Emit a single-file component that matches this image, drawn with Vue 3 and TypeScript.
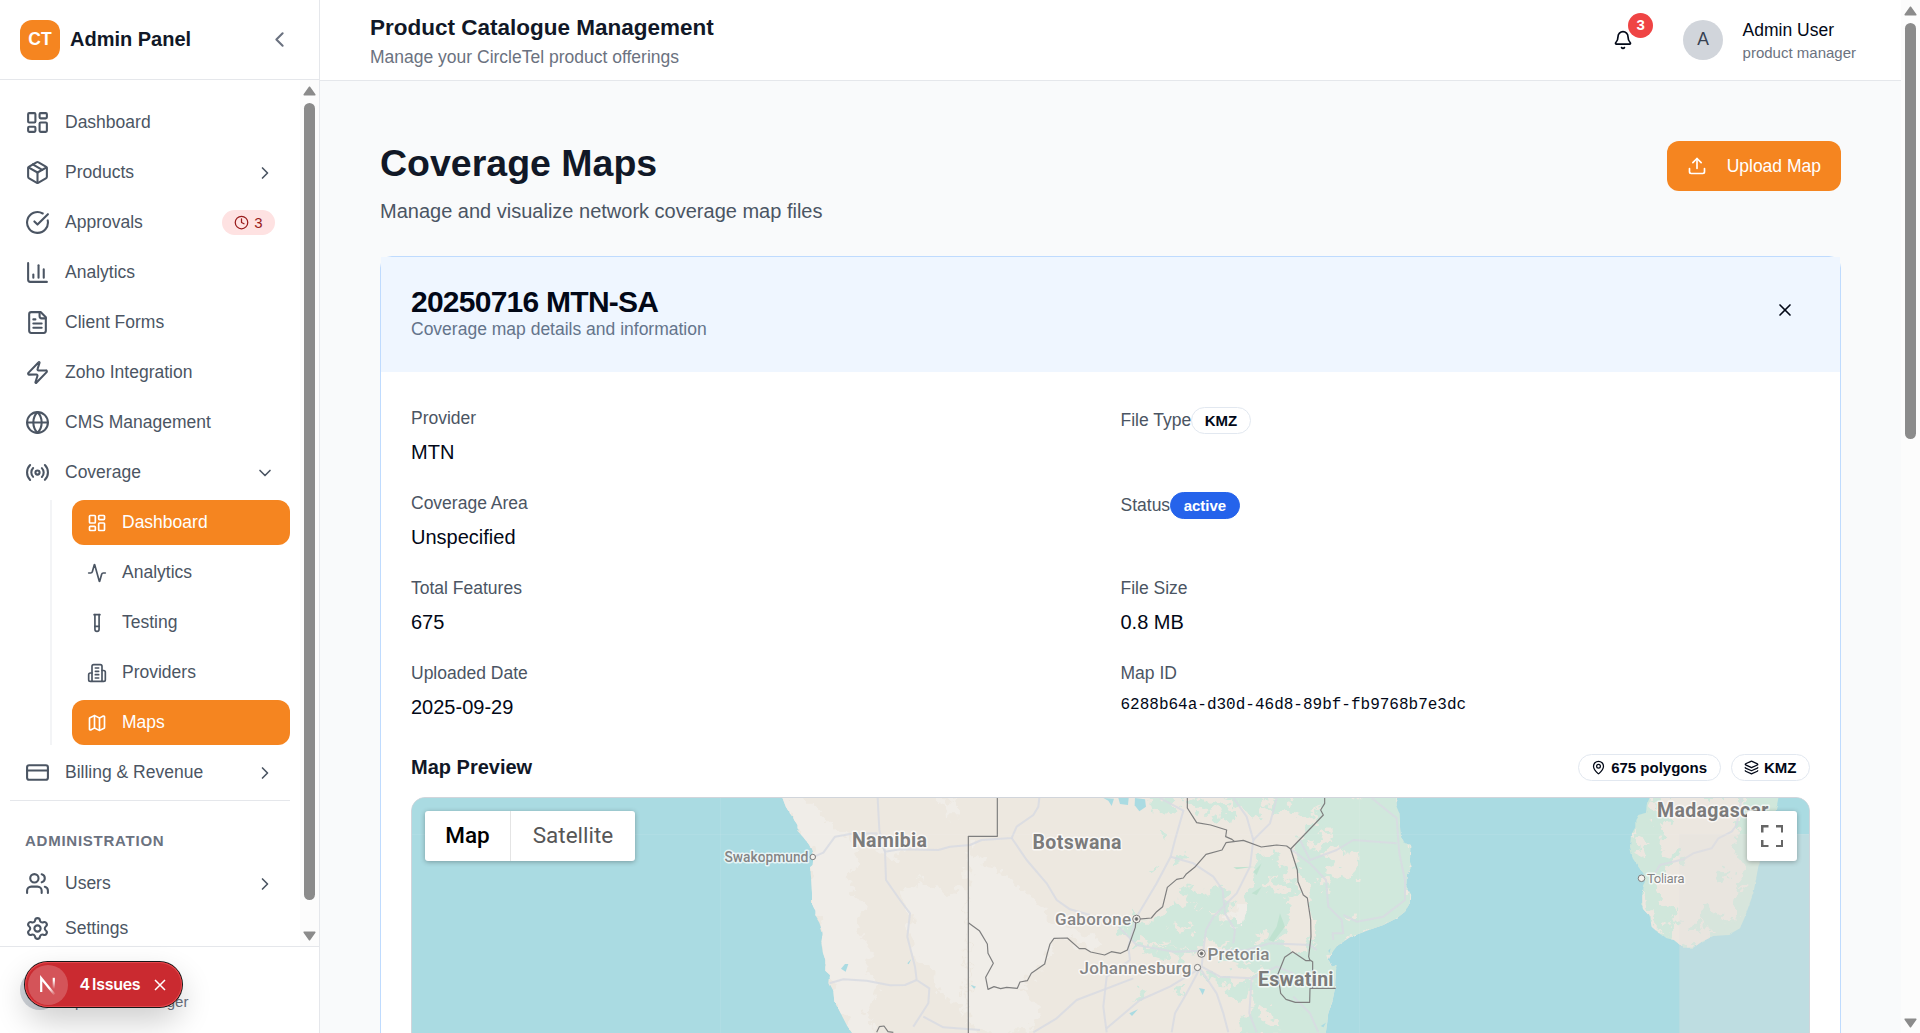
<script setup lang="ts">
interface NavItem {
  label: string
  icon: string
  chevron?: 'right' | 'down'
  badge?: number
}
interface SubItem {
  label: string
  icon: string
  active?: boolean
}

const icons: Record<string, string> = {
  dashboard:
    '<rect width="7" height="9" x="3" y="3" rx="1"/><rect width="7" height="5" x="14" y="3" rx="1"/><rect width="7" height="9" x="14" y="12" rx="1"/><rect width="7" height="5" x="3" y="16" rx="1"/>',
  package:
    '<path d="M11 21.73a2 2 0 0 0 2 0l7-4A2 2 0 0 0 21 16V8a2 2 0 0 0-1-1.73l-7-4a2 2 0 0 0-2 0l-7 4A2 2 0 0 0 3 8v8a2 2 0 0 0 1 1.73z"/><path d="M12 22V12"/><path d="M3.29 7 12 12l8.71-5"/><path d="m7.5 4.27 9 5.15"/>',
  check: '<path d="M21.801 10A10 10 0 1 1 17 3.335"/><path d="m9 11 3 3L22 4"/>',
  chart: '<path d="M3 3v16a2 2 0 0 0 2 2h16"/><path d="M18 17V9"/><path d="M13 17V5"/><path d="M8 17v-3"/>',
  file: '<path d="M15 2H6a2 2 0 0 0-2 2v16a2 2 0 0 0 2 2h12a2 2 0 0 0 2-2V7Z"/><path d="M14 2v4a2 2 0 0 0 2 2h4"/><path d="M10 9H8"/><path d="M16 13H8"/><path d="M16 17H8"/>',
  zap: '<path d="M4 14a1 1 0 0 1-.78-1.63l9.9-10.2a.5.5 0 0 1 .86.46l-1.92 6.02A1 1 0 0 0 13 10h7a1 1 0 0 1 .78 1.63l-9.9 10.2a.5.5 0 0 1-.86-.46l1.92-6.02A1 1 0 0 0 11 14z"/>',
  globe: '<circle cx="12" cy="12" r="10"/><path d="M12 2a14.5 14.5 0 0 0 0 20 14.5 14.5 0 0 0 0-20"/><path d="M2 12h20"/>',
  radio:
    '<path d="M4.9 19.1C1 15.2 1 8.8 4.9 4.9"/><path d="M7.8 16.2c-2.3-2.3-2.3-6.1 0-8.5"/><circle cx="12" cy="12" r="2"/><path d="M16.2 7.8c2.3 2.3 2.3 6.1 0 8.5"/><path d="M19.1 4.9C23 8.8 23 15.1 19.1 19"/>',
  activity:
    '<path d="M22 12h-2.48a2 2 0 0 0-1.93 1.46l-2.35 8.36a.25.25 0 0 1-.48 0L9.24 2.18a.25.25 0 0 0-.48 0l-2.35 8.38A2 2 0 0 1 4.49 12H2"/>',
  tube: '<path d="M14.5 2v17.5c0 1.4-1.1 2.5-2.5 2.5c-1.4 0-2.5-1.1-2.5-2.5V2"/><path d="M8.5 2h7"/><path d="M14.5 16h-5"/>',
  building:
    '<path d="M6 22V4a2 2 0 0 1 2-2h8a2 2 0 0 1 2 2v18Z"/><path d="M6 12H4a2 2 0 0 0-2 2v6a2 2 0 0 0 2 2h2"/><path d="M18 9h2a2 2 0 0 1 2 2v9a2 2 0 0 1-2 2h-2"/><path d="M10 6h4"/><path d="M10 10h4"/><path d="M10 14h4"/><path d="M10 18h4"/>',
  map: '<path d="M14.106 5.553a2 2 0 0 0 1.788 0l3.659-1.83A1 1 0 0 1 21 4.619v12.764a1 1 0 0 1-.553.894l-4.553 2.277a2 2 0 0 1-1.788 0l-4.212-2.106a2 2 0 0 0-1.788 0l-3.659 1.83A1 1 0 0 1 3 19.381V6.618a1 1 0 0 1 .553-.894l4.553-2.277a2 2 0 0 1 1.788 0z"/><path d="M15 5.764v15"/><path d="M9 3.236v15"/>',
  card: '<rect width="20" height="14" x="2" y="5" rx="2"/><path d="M2 10h20"/>',
  users:
    '<path d="M16 21v-2a4 4 0 0 0-4-4H6a4 4 0 0 0-4 4v2"/><circle cx="9" cy="7" r="4"/><path d="M22 21v-2a4 4 0 0 0-3-3.87"/><path d="M16 3.13a4 4 0 0 1 0 7.75"/>',
  settings:
    '<path d="M9.671 4.136a2.34 2.34 0 0 1 4.659 0 2.34 2.34 0 0 0 3.319 1.915 2.34 2.34 0 0 1 2.33 4.033 2.34 2.34 0 0 0 0 3.831 2.34 2.34 0 0 1-2.33 4.033 2.34 2.34 0 0 0-3.319 1.915 2.34 2.34 0 0 1-4.659 0 2.34 2.34 0 0 0-3.32-1.915 2.34 2.34 0 0 1-2.33-4.033 2.34 2.34 0 0 0 0-3.831A2.34 2.34 0 0 1 6.35 6.051a2.34 2.34 0 0 0 3.319-1.915"/><circle cx="12" cy="12" r="3"/>',
  left: '<path d="m15 18-6-6 6-6"/>',
  right: '<path d="m9 18 6-6-6-6"/>',
  down: '<path d="m6 9 6 6 6-6"/>',
  clock: '<circle cx="12" cy="12" r="10"/><path d="M12 6v6l4 2"/>',
  bell: '<path d="M10.268 21a2 2 0 0 0 3.464 0"/><path d="M3.262 15.326A1 1 0 0 0 4 17h16a1 1 0 0 0 .74-1.673C19.41 13.956 18 12.499 18 8A6 6 0 0 0 6 8c0 4.499-1.411 5.956-2.738 7.326"/>',
  upload: '<path d="M12 3v12"/><path d="m17 8-5-5-5 5"/><path d="M21 15v4a2 2 0 0 1-2 2H5a2 2 0 0 1-2-2v-4"/>',
  close: '<path d="M18 6 6 18"/><path d="m6 6 12 12"/>',
  pin: '<path d="M20 10c0 4.993-5.539 10.193-7.399 11.799a1 1 0 0 1-1.202 0C9.539 20.193 4 14.993 4 10a8 8 0 0 1 16 0"/><circle cx="12" cy="10" r="3"/>',
  layers:
    '<path d="M12.83 2.18a2 2 0 0 0-1.66 0L2.6 6.08a1 1 0 0 0 0 1.83l8.58 3.91a2 2 0 0 0 1.66 0l8.58-3.9a1 1 0 0 0 0-1.83z"/><path d="M2 12a1 1 0 0 0 .58.91l8.6 3.91a2 2 0 0 0 1.65 0l8.58-3.9A1 1 0 0 0 22 12"/><path d="M2 17a1 1 0 0 0 .58.91l8.6 3.91a2 2 0 0 0 1.65 0l8.58-3.9A1 1 0 0 0 22 17"/>',
}

const mainNav: NavItem[] = [
  { label: 'Dashboard', icon: 'dashboard' },
  { label: 'Products', icon: 'package', chevron: 'right' },
  { label: 'Approvals', icon: 'check', badge: 3 },
  { label: 'Analytics', icon: 'chart' },
  { label: 'Client Forms', icon: 'file' },
  { label: 'Zoho Integration', icon: 'zap' },
  { label: 'CMS Management', icon: 'globe' },
  { label: 'Coverage', icon: 'radio', chevron: 'down' },
]
const coverageNav: SubItem[] = [
  { label: 'Dashboard', icon: 'dashboard', active: true },
  { label: 'Analytics', icon: 'activity' },
  { label: 'Testing', icon: 'tube' },
  { label: 'Providers', icon: 'building' },
  { label: 'Maps', icon: 'map', active: true },
]

const details: { label: string; value: string; kind?: 'outline' | 'solid' | 'mono' }[] = [
  { label: 'Provider', value: 'MTN' },
  { label: 'File Type', value: 'KMZ', kind: 'outline' },
  { label: 'Coverage Area', value: 'Unspecified' },
  { label: 'Status', value: 'active', kind: 'solid' },
  { label: 'Total Features', value: '675' },
  { label: 'File Size', value: '0.8 MB' },
  { label: 'Uploaded Date', value: '2025-09-29' },
  { label: 'Map ID', value: '6288b64a-d30d-46d8-89bf-fb9768b7e3dc', kind: 'mono' },
]

/* Map geometry, drawn in thirds of a pixel from the map tile origin */
const africa =
  'M-358 40 L-342 82 L-325 108 L-308 135 L-308 152 L-290 172 L-272 195 L-264 215 L-260 235 L-262 255 L-270 262 L-266 300 L-264 340 L-264 372 L-254 392 L-254 408 L-242 428 L-232 458 L-236 490 L-232 515 L-224 540 L-224 572 L-210 585 L-212 610 L-200 632 L-197 665 L-180 695 L-172 712 L-160 735 L-136 770 L1276 770 L1285 700 L1298 660 L1305 625 L1309 555 L1296 560 L1286 540 L1296 518 L1312 497 L1350 472 L1400 452 L1450 435 L1490 415 L1515 395 L1529 370 L1531 340 L1519 320 L1520 285 L1535 260 L1530 245 L1531 195 L1515 190 L1502 170 L1500 140 L1498 100 L1490 80 L1488 40 Z'
const paleLand = [
  'M-358 40 L-342 82 L-325 108 L-308 135 L-308 152 L-290 172 L-272 195 L-264 215 L-262 255 L-270 262 L-264 372 L-254 408 L-232 458 L-224 572 L-210 585 L-200 632 L-197 665 L-172 712 L-136 770 L-60 770 L-100 700 L-70 640 L-100 560 L-90 500 L-130 440 L-110 360 L-160 300 L-120 250 L-150 180 L-230 110 L-300 40 Z',
  'M205 200 L260 250 L330 290 L370 340 L410 360 L450 420 L520 440 L600 480 L580 520 L500 480 L455 480 L430 560 L360 625 L420 680 L400 757 L205 757 Z',
  'M0 330 L60 300 L130 340 L200 330 L200 690 L130 650 L90 560 L40 520 L30 420 Z',
  'M990 395 L1040 380 L1055 420 L1030 455 L995 440 Z',
  'M-60 200 L-20 180 L10 210 L-30 240 Z',
  'M120 60 L170 54 L165 110 L140 90 Z',
]
const greenLand = [
  'M1275 40 L1500 40 L1510 100 L1515 170 L1545 200 L1535 280 L1540 345 L1525 405 L1450 445 L1350 482 L1300 520 L1292 540 L1320 560 L1315 625 L1295 700 L1286 780 L1140 780 L1125 700 L1060 650 L1060 590 L1130 590 L1150 520 L1220 515 L1235 450 L1225 340 L1190 240 L1180 200 L1240 130 Z',
  'M985 40 L1275 40 L1262 85 L1215 110 L1180 90 L1130 105 L1090 80 L1070 120 L1035 80 L1000 75 Z',
  'M1060 240 L1120 225 L1160 240 L1145 290 L1190 310 L1210 350 L1150 360 L1170 400 L1150 470 L1110 490 L1080 450 L1035 425 L1050 330 Z',
  'M840 325 L880 318 L900 345 L940 320 L985 330 L965 360 L1010 365 L960 415 L900 380 L870 370 Z',
  'M755 425 L790 400 L840 395 L900 400 L950 435 L1040 425 L1085 450 L1060 500 L1010 505 L930 480 L880 510 L800 500 L740 475 L690 490 L655 440 L710 425 Z',
  'M950 505 L1130 485 L1190 520 L1130 590 L1060 575 L1010 560 L960 545 Z',
  'M800 395 L850 360 L900 385 L960 380 L980 430 L900 440 L830 430 Z',
  'M700 495 L790 500 L880 515 L800 535 L730 520 Z',
  'M1060 610 L1140 630 L1200 665 L1240 770 L1020 770 L1015 730 L1060 690 Z',
  'M740 40 L805 40 L830 85 L790 105 L750 72 Z',
  'M780 150 L803 160 L795 182 L782 176 Z',
  'M825 225 L868 220 L866 238 L820 240 Z',
  'M750 255 L775 262 L765 275 Z',
  'M845 60 L900 45 L935 80 L960 70 L1010 90 L1000 125 L930 95 L880 95 Z',
  'M890 565 L960 585 L1000 620 L1040 600 L1070 630 L1010 655 L960 610 Z',
  'M720 628 L750 635 L700 665 L705 645 Z',
  'M820 625 L850 625 L835 645 Z',
  'M700 385 L710 410 L690 395 Z',
]
const creamPatches = [
  'M1265 215 L1310 195 L1330 220 L1385 205 L1370 260 L1375 300 L1340 290 L1290 275 L1300 245 Z',
  'M1225 190 L1270 165 L1305 162 L1260 200 L1235 215 Z',
  'M1090 305 L1130 310 L1190 330 L1150 345 L1090 325 Z',
  'M1180 490 L1200 470 L1215 505 Z',
  'M1080 690 L1120 700 L1150 745 L1110 735 L1075 720 Z',
  'M1210 335 L1240 420 L1250 470 L1235 500 L1225 400 Z',
  'M930 395 L965 400 L940 415 Z',
  'M1075 455 L1110 460 L1100 485 L1060 480 Z',
  'M800 440 L850 430 L880 448 L830 458 Z',
  'M1270 285 L1290 290 L1275 330 L1250 310 Z',
  'M1090 60 L1130 62 L1110 85 Z',
  'M1150 60 L1190 65 L1165 80 Z',
  'M1010 535 L1060 530 L1050 550 Z',
  'M1350 405 L1370 400 L1362 425 Z',
  'M780 480 L820 478 L800 492 Z',
]
const deepGreen = [
  'M1140 400 L1155 440 L1120 485 L1105 480 L1130 440 Z',
  'M1055 340 L1085 320 L1070 345 Z',
  'M1000 262 L1060 260 L1010 268 Z',
  'M1085 250 L1070 285 L1060 275 Z',
]
const lakes = [
  'M610 54 L642 56 L635 78 L625 62 Z',
  'M655 54 L686 54 L684 75 L660 72 Z',
  'M705 54 L735 58 L738 80 L718 94 L704 76 Z',
  'M-165 552 L-155 552 L-163 575 L-177 566 Z',
  'M22 550 L34 537 L26 553 Z',
  'M212 614 L228 620 L222 626 Z',
  'M897 624 L915 628 L908 645 Z',
  'M1278 728 L1270 742 L1262 738 Z',
  'M688 700 L714 688 L696 708 Z',
  'M1285 512 L1292 505 L1288 520 Z',
]
const roads = [
  'M-262 232 L-230 218 L-195 170 L-150 162 L-70 160 L-45 215 L0 208 L115 210 L150 200 L210 195 L245 180 L335 174 L350 140 L400 105 L415 80 L418 54',
  'M-67 54 L-62 150 L-45 215 L-42 300 L0 360 L30 400 L22 470 L45 560 L50 600 L88 625 L85 670 L40 740',
  'M-212 610 L-170 598 L-100 602 L-30 616 L15 615 L50 600',
  'M70 710 L130 742 L240 750',
  'M335 174 L380 240 L440 310 L470 360 L510 388 L570 405',
  'M780 54 L850 92 L825 180 L812 230 L770 310 L710 410 L685 500 L690 540 L620 590 L610 680 L620 757',
  'M812 230 L880 250 L940 290 L968 330 L975 400 L1005 450 L1000 490',
  'M1000 54 L1040 110 L1060 180 L1050 260 L1010 340 L940 410 L918 450 L910 510 L905 560 L960 590 L1055 595 L1130 560 L1180 580',
  'M1060 180 L1110 130 L1130 54',
  'M1172 207 L1230 250 L1278 300 L1285 380 L1325 420 L1330 460 L1298 460 L1300 480',
  'M1200 180 L1230 240 L1310 210 L1360 180 L1490 190',
  'M1415 54 L1490 115 L1498 220 L1515 300 L1515 360 L1450 410 L1370 425 L1330 405',
  'M400 757 L470 715 L530 660 L700 595',
  'M620 745 L720 660 L810 620 L900 565 L860 640 L825 700 L815 757',
  'M900 565 L950 640 L970 700 L985 757',
  'M655 440 L710 495 L820 515 L910 512 L1040 510 L1110 490 L1230 495 L1250 510',
  'M1055 595 L1048 700 L1070 757',
  'M1180 650 L1230 700 L1255 757',
]
const borders = [
  'M292 40 V169 H205 V770',
  'M205 428 L238 452 L262 492 L264 520 L280 550 L257 592 L264 628 L282 620 L302 626 L320 622 L352 625 L360 606 L382 602 L394 580 L434 552 L442 520 L450 492 L462 475 L502 474 L538 506 L556 506 L572 516 L614 525 L634 515 L662 520 L682 510 L706 442 L708 418 L754 414 L770 395 L788 380 L802 322 L830 298 L850 294 L858 283 L884 262 L918 223 L966 210 L978 188 L1030 181 L1084 201 L1130 195 L1160 198 L1172 207 L1192 270 L1194 305 L1210 345 L1222 354 L1232 420 L1233 470 L1226 530 L1230 542 L1218 542 L1178 515 L1154 532 L1134 582 L1142 640 L1158 658 L1186 667 L1229 667 L1230 625 L1307 625',
  'M862 40 V84 L890 128 L932 135 L980 150 L977 170 L996 178 L1004 185',
  'M1274 40 V70 L1262 90 L1270 105 L1172 207',
  'M1230 540 L1238 545 L1238 625',
  'M-70 757 L-62 740 L-48 738 L-36 755 L-20 757',
]
const madagascar =
  'M752 165 L740 195 L738 218 L715 225 L706 240 L706 262 L693 285 L690 320 L698 355 L718 385 L730 400 L735 425 L727 440 L727 505 L750 530 L755 560 L775 578 L795 593 L822 600 L850 623 L880 623 L905 605 L940 588 L985 585 L1020 565 L1035 530 L1060 460 L1075 380 L1090 330 L1120 250 L1137 165 Z'
const madagascarCream = [
  'M765 165 L1035 165 L1020 240 L1000 310 L1030 400 L1000 540 L950 580 L905 615 L880 633 L850 633 L822 610 L800 550 L830 520 L790 490 L770 440 L790 390 L830 360 L780 330 L790 270 L760 230 Z',
  'M715 305 L740 300 L730 345 L712 335 Z',
  'M700 280 L725 265 L712 300 Z',
  'M720 440 L740 470 L760 550 L790 585 L750 565 L720 505 Z',
]
const madagascarGreen = [
  'M745 220 L820 235 L810 250 L760 245 Z',
  'M800 530 L830 500 L822 545 Z',
  'M860 560 L900 540 L920 560 L870 580 Z',
  'M820 325 L850 320 L840 360 L800 375 Z',
  'M960 390 L1000 385 L980 430 L950 410 Z',
  'M770 260 L785 270 L775 280 Z',
  'M910 490 L960 530 L990 560 L940 580 L905 530 Z',
  'M760 390 L800 385 L770 430 Z',
]
</script>

<template>
  <div class="app">
    <aside class="sidebar">
      <div class="brand">
        <div class="logo">CT</div>
        <span class="brand-name">Admin Panel</span>
        <svg class="icon muted" viewBox="0 0 24 24" v-html="icons.left" />
      </div>

      <div class="side-scroll">
        <nav class="nav">
          <div v-for="item in mainNav" :key="item.label" class="nav-item">
            <svg class="icon" viewBox="0 0 24 24" v-html="icons[item.icon]" />
            <span class="nav-label">{{ item.label }}</span>
            <svg v-if="item.chevron" class="icon sm" viewBox="0 0 24 24" v-html="icons[item.chevron]" />
            <span v-if="item.badge" class="pending">
              <svg class="icon xs" viewBox="0 0 24 24" v-html="icons.clock" />{{ item.badge }}
            </span>
          </div>
          <div class="subnav">
            <div v-for="item in coverageNav" :key="item.label" class="nav-item sub" :class="{ active: item.active }">
              <svg class="icon sm" viewBox="0 0 24 24" v-html="icons[item.icon]" />
              <span class="nav-label">{{ item.label }}</span>
            </div>
          </div>
          <div class="nav-item">
            <svg class="icon" viewBox="0 0 24 24" v-html="icons.card" />
            <span class="nav-label">Billing &amp; Revenue</span>
            <svg class="icon sm" viewBox="0 0 24 24" v-html="icons.right" />
          </div>
          <div class="admin-group">
            <h3>Administration</h3>
            <div class="nav-item">
              <svg class="icon" viewBox="0 0 24 24" v-html="icons.users" />
              <span class="nav-label">Users</span>
              <svg class="icon sm" viewBox="0 0 24 24" v-html="icons.right" />
            </div>
            <div class="nav-item">
              <svg class="icon" viewBox="0 0 24 24" v-html="icons.settings" />
              <span class="nav-label">Settings</span>
            </div>
          </div>
        </nav>
        <div class="scrollbar">
          <svg class="arrow" viewBox="0 0 13 10"><path d="M6.5 1.2 11.8 8.8H1.2Z" /></svg>
          <div class="thumb side-thumb"></div>
          <svg class="arrow" viewBox="0 0 13 10"><path d="M6.5 8.8 1.2 1.2H11.8Z" /></svg>
        </div>
      </div>

      <div class="side-footer">
        <div class="avatar"></div>
        <div class="who signed-in">
          <span class="who-role">product manager</span>
        </div>
        <div class="issues">
          <div class="issues-mark">
            <svg viewBox="0 0 40 40" width="40" height="40">
              <defs>
                <linearGradient id="nSlash" x1="13" y1="13" x2="27" y2="30" gradientUnits="userSpaceOnUse">
                  <stop offset="0.6" stop-color="#fff" /><stop offset="1" stop-color="#fff" stop-opacity="0" />
                </linearGradient>
                <linearGradient id="nStem" x1="26" y1="13" x2="26" y2="24" gradientUnits="userSpaceOnUse">
                  <stop offset="0.2" stop-color="#fff" /><stop offset="1" stop-color="#fff" stop-opacity="0" />
                </linearGradient>
              </defs>
              <path d="M13.2 27V13.2L26.5 29.5" fill="none" stroke="url(#nSlash)" stroke-width="2.2" />
              <path d="M25.8 12.8V24" stroke="url(#nStem)" stroke-width="2.2" />
            </svg>
          </div>
          <span class="issues-text">4 Issues</span>
          <svg class="issues-x" viewBox="0 0 12 12"><path d="M1 1l10 10M11 1 1 11" /></svg>
        </div>
      </div>
    </aside>

    <div class="content">
      <header class="topbar">
        <div>
          <h1>Product Catalogue Management</h1>
          <p>Manage your CircleTel product offerings</p>
        </div>
        <div class="top-right">
          <div class="bell">
            <svg class="icon sm" viewBox="0 0 24 24" v-html="icons.bell" />
            <span class="bell-count">3</span>
          </div>
          <div class="avatar">A</div>
          <div class="who">
            <span class="who-name">Admin User</span>
            <span class="who-role">product manager</span>
          </div>
        </div>
      </header>

      <main class="page">
        <div class="page-head">
          <div>
            <h2>Coverage Maps</h2>
            <p>Manage and visualize network coverage map files</p>
          </div>
          <button class="upload">
            <svg class="icon sm" viewBox="0 0 24 24" v-html="icons.upload" />
            <span>Upload Map</span>
          </button>
        </div>

        <section class="card">
          <div class="card-head">
            <div>
              <h3>20250716 MTN-SA</h3>
              <p>Coverage map details and information</p>
            </div>
            <div class="close"><svg class="icon sm" viewBox="0 0 24 24" v-html="icons.close" /></div>
          </div>
          <div class="card-body">
            <div class="details">
              <div
                v-for="d in details"
                :key="d.label"
                class="detail"
                :class="{ inline: d.kind === 'outline' || d.kind === 'solid' }"
              >
                <span class="d-label">{{ d.label }}</span>
                <span v-if="d.kind === 'outline' || d.kind === 'solid'" class="badge" :class="d.kind">{{ d.value }}</span>
                <span v-else class="d-value" :class="{ mono: d.kind === 'mono' }">{{ d.value }}</span>
              </div>
            </div>

            <div class="preview-head">
              <h4>Map Preview</h4>
              <div class="preview-badges">
                <span class="badge outline"><svg class="icon xs" viewBox="0 0 24 24" v-html="icons.pin" />675 polygons</span>
                <span class="badge outline"><svg class="icon xs" viewBox="0 0 24 24" v-html="icons.layers" />KMZ</span>
              </div>
            </div>

            <div class="map">
              <svg class="map-canvas" viewBox="412 798 1397 270" width="1397" height="270">
                <defs>
                  <filter id="ragged" x="-5%" y="-5%" width="110%" height="110%" color-interpolation-filters="sRGB">
                    <feTurbulence type="fractalNoise" baseFrequency="0.03" numOctaves="3" seed="4" />
                    <feDisplacementMap in="SourceGraphic" scale="75" xChannelSelector="R" yChannelSelector="G" />
                  </filter>
                  <filter id="coast" x="-5%" y="-5%" width="110%" height="110%" color-interpolation-filters="sRGB">
                    <feTurbulence type="fractalNoise" baseFrequency="0.05" numOctaves="2" seed="9" />
                    <feDisplacementMap in="SourceGraphic" scale="9" xChannelSelector="R" yChannelSelector="G" />
                  </filter>
                  <clipPath id="africaClip"><path :d="africa" /></clipPath>
                  <clipPath id="madaClip"><path :d="madagascar" /></clipPath>
                </defs>
                <rect x="400" y="780" width="1420" height="300" fill="#aadbe2" />
                <g transform="translate(900 780) scale(0.33333)">
                  <path :d="africa" fill="#ede8e0" filter="url(#coast)" />
                  <g clip-path="url(#africaClip)">
                    <g filter="url(#ragged)">
                      <path v-for="(d, i) in paleLand" :key="'p' + i" :d="d" fill="#f0ede8" />
                    </g>
                    <g filter="url(#ragged)">
                      <path v-for="(d, i) in greenLand" :key="'g' + i" :d="d" fill="#d0e8dc" />
                      <path v-for="(d, i) in creamPatches" :key="'c' + i" :d="d" fill="#ede8e0" />
                    </g>
                    <path v-for="(d, i) in deepGreen" :key="'d' + i" :d="d" fill="#bfe2d0" />
                    <path v-for="(d, i) in lakes" :key="'l' + i" :d="d" fill="#aadbe2" />
                    <path v-for="(d, i) in roads" :key="'r' + i" :d="d" class="road" />
                  </g>
                  <path v-for="(d, i) in borders" :key="'b' + i" :d="d" class="border" />
                </g>
                <g transform="translate(1400 740) scale(0.33333)">
                  <path :d="madagascar" fill="#d0e7db" filter="url(#coast)" />
                  <g clip-path="url(#madaClip)">
                    <g filter="url(#ragged)">
                      <path v-for="(d, i) in madagascarCream" :key="'mc' + i" :d="d" fill="#ece7e0" />
                      <path v-for="(d, i) in madagascarGreen" :key="'mg' + i" :d="d" fill="#d0e7db" />
                    </g>
                    <path class="road" d="M1025 174 L1010 255 L995 275 L955 295 L935 325 L880 340 L850 358 L780 375 L765 400" />
                  </g>
                  <rect x="838" y="282" width="400" height="720" fill="#e5e3df" fill-opacity="0.34" />
                </g>
                <path d="M412 834.5H1809M720.5 798V1068M1359.5 798V1068" stroke="#fff" stroke-opacity="0.07" />

                <g class="labels">
                  <text x="724.5" y="862" font-size="14" class="city" textLength="84">Swakopmund</text>
                  <text x="852" y="847" font-size="19.5" class="country" textLength="75">Namibia</text>
                  <text x="1032.5" y="849" font-size="19.5" class="country" textLength="89">Botswana</text>
                  <text x="1055" y="925" font-size="17" class="city" textLength="76">Gaborone</text>
                  <text x="1207.5" y="959.5" font-size="17" class="city" textLength="62">Pretoria</text>
                  <text x="1079.5" y="974" font-size="17" class="city" textLength="112">Johannesburg</text>
                  <text x="1258" y="985.5" font-size="19.5" class="country" textLength="75.5">Eswatini</text>
                  <text x="1657" y="817" font-size="19.5" class="country" textLength="111.5">Madagascar</text>
                  <text x="1647" y="883" font-size="13.5" class="city small" textLength="37.5">Toliara</text>
                </g>
                <g fill="#f4f1ec" stroke="#7c7c7c" stroke-width="1">
                  <circle cx="812.8" cy="857" r="2.7" />
                  <circle cx="1136.5" cy="919" r="3.8" /><circle cx="1136.5" cy="919" r="1.4" fill="#666" />
                  <circle cx="1201.5" cy="953.5" r="3.8" /><circle cx="1201.5" cy="953.5" r="1.4" fill="#666" />
                  <circle cx="1197.5" cy="967.5" r="3.1" />
                  <circle cx="1641.5" cy="878.3" r="3.3" />
                </g>
              </svg>
              <div class="map-types">
                <span class="type on">Map</span>
                <span class="type">Satellite</span>
              </div>
              <div class="fullscreen">
                <svg viewBox="0 0 18 18"><path d="M0 0v6h2V2h4V0H0zm16 0h-4v2h4v4h2V0h-2zm0 16h-4v2h6v-6h-2v4zM2 12H0v6h6v-2H2v-4z" /></svg>
              </div>
            </div>
          </div>
        </section>
      </main>
    </div>

    <div class="scrollbar page-bar">
      <svg class="arrow" viewBox="0 0 13 10"><path d="M6.5 1.2 11.8 8.8H1.2Z" /></svg>
      <div class="thumb page-thumb"></div>
      <svg class="arrow" viewBox="0 0 13 10"><path d="M6.5 8.8 1.2 1.2H11.8Z" /></svg>
    </div>
  </div>
</template>

<style>
html,
body {
  margin: 0;
  overflow: hidden;
}
</style>

<style scoped>
.app {
  display: flex;
  height: 100vh;
  overflow: hidden;
  background: #f9fafb;
  color: #020817;
  font-family: 'Liberation Sans', Arial, sans-serif;
  font-size: 17.5px;
  line-height: 25px;
}
.app *,
.app *::before {
  box-sizing: border-box;
}
h1, h2, h3, h4, p {
  margin: 0;
}
.icon {
  width: 25px;
  height: 25px;
  flex: none;
  fill: none;
  stroke: currentColor;
  stroke-width: 2;
  stroke-linecap: round;
  stroke-linejoin: round;
}
.icon.sm {
  width: 20px;
  height: 20px;
}
.icon.xs {
  width: 15px;
  height: 15px;
}
.muted {
  color: #6b7280;
}

/* sidebar */
.sidebar {
  display: flex;
  flex-direction: column;
  width: 320px;
  flex: none;
  background: #fff;
  border-right: 1px solid #e5e7eb;
}
.brand {
  display: flex;
  align-items: center;
  height: 80px;
  flex: none;
  padding: 0 27px 0 20px;
  border-bottom: 1px solid #e5e7eb;
}
.logo {
  width: 40px;
  height: 40px;
  border-radius: 12px;
  background: #f58520;
  color: #fff;
  font-weight: 700;
  line-height: 38px;
  text-align: center;
}
.brand-name {
  flex: 1;
  margin-left: 10px;
  color: #111827;
  font-size: 20px;
  font-weight: 700;
}
.side-scroll {
  display: flex;
  flex: 1;
  min-height: 0;
}
.nav {
  flex: 1;
  padding: 20px 10px 0;
  overflow: hidden;
  color: #4b5563;
}
.nav-item {
  display: flex;
  align-items: center;
  height: 45px;
  margin-bottom: 5px;
  padding: 0 15px;
  border-radius: 12px;
}
.nav-label {
  flex: 1;
  margin-left: 15px;
  line-height: 25px;
  padding-bottom: 1px;
}
.pending {
  display: flex;
  align-items: center;
  gap: 5px;
  height: 25px;
  padding: 0 12.5px;
  border-radius: 13px;
  background: #fee2e2;
  color: #991b1b;
  font-size: 15px;
}
.subnav {
  margin: 0 0 5px 40px;
  padding-left: 20px;
  border-left: 2px solid #f3f4f6;
}
.subnav .nav-item:last-child {
  margin-bottom: 0;
}
.sub.active {
  background: #f58520;
  color: #fff;
}
.admin-group {
  border-top: 1px solid #e5e7eb;
  padding-top: 30px;
}
.admin-group h3 {
  margin-bottom: 10px;
  padding-left: 15px;
  color: #6b7280;
  font-size: 15px;
  line-height: 20px;
  letter-spacing: 0.75px;
  text-transform: uppercase;
}
.admin-group .nav-item {
  margin: 0;
}
.scrollbar {
  display: flex;
  flex-direction: column;
  align-items: center;
  flex: none;
  width: 19px;
  padding: 6px 0 5px;
  background: #fcfcfc;
}
.arrow {
  width: 13px;
  height: 10px;
  fill: #8b8b8b;
  stroke: #8b8b8b;
  stroke-width: 1.5;
  stroke-linejoin: round;
}
.thumb {
  width: 11px;
  margin-top: 7px;
  border-radius: 6px;
  background: #8b8b8b;
}
.side-thumb {
  height: 797px;
}
.scrollbar .arrow:last-child {
  margin-top: auto;
}
.side-footer {
  position: relative;
  display: flex;
  align-items: center;
  gap: 15px;
  height: 87px;
  flex: none;
  padding-left: 20px;
  border-top: 1px solid #e5e7eb;
}
.avatar {
  width: 40px;
  height: 40px;
  flex: none;
  border-radius: 50%;
  background: #d1d5db;
  color: #374151;
  line-height: 39px;
  text-align: center;
}
.who {
  display: flex;
  flex-direction: column;
}
.who.signed-in {
  padding-top: 23px;
}
.who-name {
  line-height: 25px;
}
.who-role {
  color: #6b7280;
  font-size: 15px;
  line-height: 20px;
}
.issues {
  position: absolute;
  left: 25px;
  top: 15px;
  display: flex;
  align-items: center;
  width: 157px;
  height: 45px;
  padding-left: 3px;
  border-radius: 23px;
  background: #ca2a30;
  box-shadow: inset 0 0 0 1px #e5484d, 0 0 0 1px #171717, 0 14px 32px rgba(0, 0, 0, 0.2);
  color: #fff;
  font-family: Inter, sans-serif;
  font-size: 16px;
  font-weight: 600;
  letter-spacing: -0.3px;
  word-spacing: -1.5px;
}
.issues-mark {
  width: 40px;
  height: 40px;
  flex: none;
  border-radius: 50%;
  background: rgba(255, 255, 255, 0.2);
}
.issues-text {
  flex: none;
  width: 74px;
  padding-left: 11.5px;
  white-space: nowrap;
}
.issues-x {
  width: 12px;
  height: 12px;
  margin-left: 11.5px;
  fill: none;
  stroke: #fff;
  stroke-width: 1.5;
}

/* top bar */
.content {
  flex: 1;
  min-width: 0;
}
.topbar {
  display: flex;
  align-items: center;
  justify-content: space-between;
  height: 81px;
  padding: 0 45px 0 50px;
  border-bottom: 1px solid #e5e7eb;
  background: #fff;
}
.topbar h1 {
  color: #111827;
  font-size: 22.5px;
  line-height: 35px;
}
.topbar p {
  color: #6b7280;
}
.top-right {
  display: flex;
  align-items: center;
}
.bell {
  position: relative;
  display: flex;
  margin-right: 50px;
}
.bell-count {
  position: absolute;
  left: 15px;
  top: -17px;
  width: 25px;
  height: 25px;
  border-radius: 50%;
  background: #ef4444;
  color: #fff;
  font-size: 15px;
  font-weight: 700;
  line-height: 24px;
  text-align: center;
}
.top-right .who {
  margin-left: 19.5px;
}

/* page */
.page {
  padding: 60px;
}
.page-head {
  display: flex;
  align-items: flex-start;
  justify-content: space-between;
  height: 115px;
}
.page-head h2 {
  margin-bottom: 10px;
  color: #111827;
  font-size: 37.5px;
  line-height: 45px;
}
.page-head p {
  color: #4b5563;
  font-size: 20px;
  line-height: 30px;
}
.upload {
  display: flex;
  align-items: center;
  gap: 20px;
  height: 50px;
  padding: 0 20px;
  border: 0;
  border-radius: 12px;
  background: #f58520;
  color: #fff;
  font: inherit;
}
.card {
  border: 1px solid #bfdbfe;
  border-radius: 12px;
  background: #fff;
}
.card-head {
  display: flex;
  justify-content: space-between;
  height: 115px;
  padding: 30px;
  background: #eff6ff;
}
.card-head h3 {
  font-size: 30px;
  line-height: 30px;
  letter-spacing: -0.75px;
}
.card-head p {
  color: #64748b;
}
.close {
  display: flex;
  align-items: center;
  justify-content: center;
  width: 50px;
  height: 45px;
}
.card-body {
  padding: 30px;
}
.details {
  display: grid;
  grid-template-columns: 1fr 1fr;
  grid-auto-rows: 65px;
  gap: 20px;
}
.detail {
  display: flex;
  flex-direction: column;
}
.d-label {
  color: #4b5563;
  line-height: 32px;
  margin-bottom: 3px;
}
.d-value {
  font-size: 20px;
  line-height: 30px;
}
.d-value.mono {
  font-family: 'Liberation Mono', monospace;
  font-size: 16px;
  line-height: 27px;
}
.detail.inline {
  flex-direction: row;
  align-items: baseline;
  padding-top: 5px;
}
.inline .d-label {
  line-height: 25px;
}
.badge {
  display: inline-flex;
  align-items: center;
  gap: 5px;
  height: 27px;
  padding: 0 12.5px;
  border: 1px solid #e2e8f0;
  border-radius: 14px;
  font-size: 15px;
  font-weight: 700;
  line-height: 25px;
}
.badge.solid {
  border-color: #2563eb;
  background: #2563eb;
  color: #fff;
}
.preview-head {
  display: flex;
  align-items: center;
  justify-content: space-between;
  height: 30px;
  margin: 30px 0 15px;
}
.preview-head h4 {
  color: #111827;
  font-size: 20px;
}
.preview-badges {
  display: flex;
  gap: 10px;
}
.map {
  position: relative;
  height: 500px;
  overflow: hidden;
  border: 1px solid #d1d5db;
  border-radius: 14px;
  background: #aadbe2;
}
.map-canvas {
  display: block;
}
.road {
  fill: none;
  stroke: #d8dbe2;
  stroke-width: 6;
  stroke-linejoin: round;
  opacity: 0.85;
}
.border {
  fill: none;
  stroke: #7f7f7f;
  stroke-width: 3.6;
  stroke-linejoin: round;
}
.labels text {
  font-family: Roboto, sans-serif;
  paint-order: stroke;
  stroke: rgba(255, 255, 255, 0.7);
  stroke-width: 3px;
  stroke-linejoin: round;
}
.country {
  fill: #7b7b7b;
  font-weight: 700;
}
.city {
  fill: #858585;
  font-weight: 500;
}
.city.small {
  font-weight: 400;
}
.map-types {
  position: absolute;
  left: 13px;
  top: 13px;
  display: flex;
  height: 50px;
  border-radius: 3px;
  background: #fff;
  box-shadow: 0 1px 5px rgba(0, 0, 0, 0.3);
  font-family: Roboto, sans-serif;
  font-size: 22.5px;
  line-height: 48px;
}
.type {
  width: 124px;
  color: #565656;
  text-align: center;
}
.type.on {
  width: 86px;
  border-right: 1px solid #e4e4e4;
  color: #000;
  font-weight: 500;
}
.fullscreen {
  position: absolute;
  right: 12px;
  top: 13px;
  display: flex;
  align-items: center;
  justify-content: center;
  width: 50px;
  height: 50px;
  border-radius: 3px;
  background: #fff;
  box-shadow: 0 1px 5px rgba(0, 0, 0, 0.3);
}
.fullscreen svg {
  width: 22.5px;
  height: 22.5px;
  fill: #666;
}
.page-bar {
  height: 100%;
}
.page-thumb {
  height: 416px;
}
</style>
